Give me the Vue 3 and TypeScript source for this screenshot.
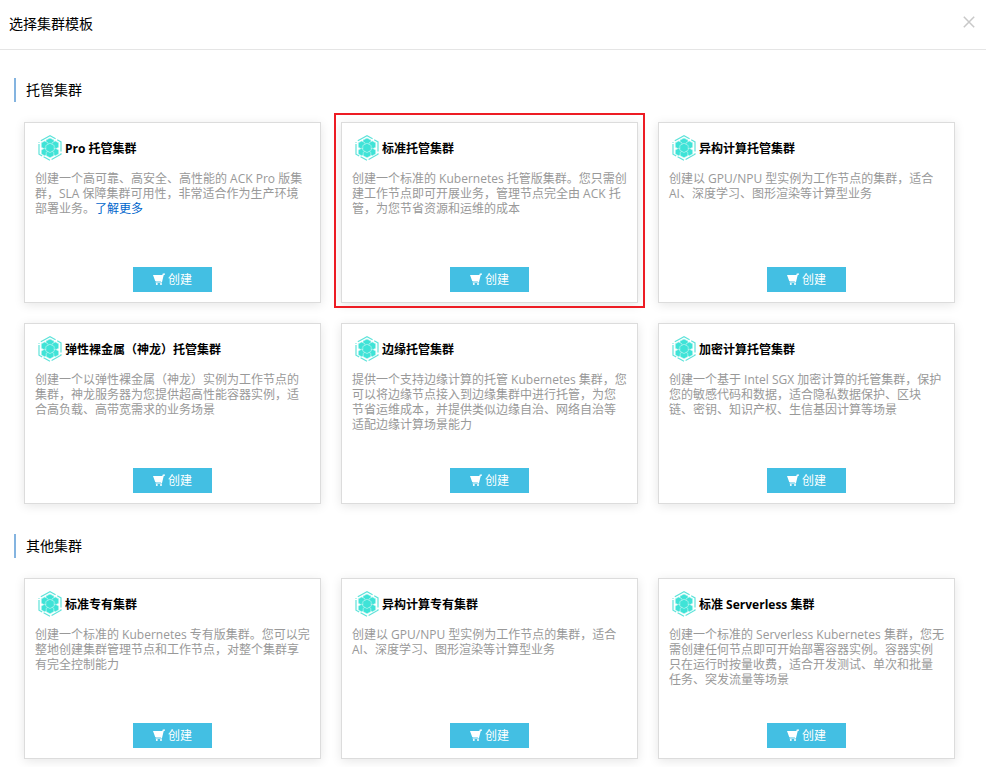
<script setup lang="ts">
interface Template {
  name: string
  lines: string[]
  link?: string
  highlighted?: boolean
}

interface Section {
  id: string
  title: string
  templates: Template[]
}

const sections: Section[] = [
  {
    id: 'managed',
    title: '托管集群',
    templates: [
      {
        name: 'Pro 托管集群',
        lines: ['创建一个高可靠、高安全、高性能的 ACK Pro 版集', '群，SLA 保障集群可用性，非常适合作为生产环境', '部署业务。'],
        link: '了解更多',
      },
      {
        name: '标准托管集群',
        lines: ['创建一个标准的 Kubernetes 托管版集群。您只需创', '建工作节点即可开展业务，管理节点完全由 ACK 托', '管，为您节省资源和运维的成本'],
        highlighted: true,
      },
      {
        name: '异构计算托管集群',
        lines: ['创建以 GPU/NPU 型实例为工作节点的集群，适合', 'AI、深度学习、图形渲染等计算型业务'],
      },
      {
        name: '弹性裸金属（神龙）托管集群',
        lines: ['创建一个以弹性裸金属（神龙）实例为工作节点的', '集群，神龙服务器为您提供超高性能容器实例，适', '合高负载、高带宽需求的业务场景'],
      },
      {
        name: '边缘托管集群',
        lines: ['提供一个支持边缘计算的托管 Kubernetes 集群，您', '可以将边缘节点接入到边缘集群中进行托管，为您', '节省运维成本，并提供类似边缘自治、网络自治等', '适配边缘计算场景能力'],
      },
      {
        name: '加密计算托管集群',
        lines: ['创建一个基于 Intel SGX 加密计算的托管集群，保护', '您的敏感代码和数据，适合隐私数据保护、区块', '链、密钥、知识产权、生信基因计算等场景'],
      },
    ],
  },
  {
    id: 'other',
    title: '其他集群',
    templates: [
      {
        name: '标准专有集群',
        lines: ['创建一个标准的 Kubernetes 专有版集群。您可以完', '整地创建集群管理节点和工作节点，对整个集群享', '有完全控制能力'],
      },
      {
        name: '异构计算专有集群',
        lines: ['创建以 GPU/NPU 型实例为工作节点的集群，适合', 'AI、深度学习、图形渲染等计算型业务'],
      },
      {
        name: '标准 Serverless 集群',
        lines: ['创建一个标准的 Serverless Kubernetes 集群，您无', '需创建任何节点即可开始部署容器实例。容器实例', '只在运行时按量收费，适合开发测试、单次和批量', '任务、突发流量等场景'],
      },
    ],
  },
]
</script>

<template>
  <main class="dialog">
    <header class="dialog-header">
      <h1 class="dialog-title">选择集群模板</h1>
      <button class="close" type="button" aria-label="关闭">
        <svg viewBox="0 0 12 12" width="12" height="12" aria-hidden="true">
          <path d="M.8.8 11.2 11.2M11.2.8.8 11.2" fill="none" stroke="#c8c8c8" stroke-width="1.5" />
        </svg>
      </button>
    </header>

    <section v-for="section in sections" :key="section.id" class="section">
      <h2 class="section-title">{{ section.title }}</h2>
      <div class="grid">
        <article
          v-for="item in section.templates"
          :key="item.name"
          class="card"
          :class="{ highlighted: item.highlighted }"
        >
          <h3 class="card-title">
            <svg class="logo" viewBox="0 0 24 26" width="24" height="26" aria-hidden="true">
              <path
                d="M2.8 5.8 12 .8l5.6 3M19.2 4.8 23 6.9v9.6M23 18.2v1L13.6 24.5M12 25.3 5.6 21.8M4.2 21 1 19.2V9M1 7.8v-.9"
                fill="none"
                stroke="#5fe3da"
                stroke-width="1.2"
              />
              <g fill="#3fe3d7" stroke="#c9f7f3" stroke-width=".6">
                <path d="M12 3 16 5.1v3.8L12 11 8 8.9V5.1z" />
                <path d="M6.7 6 10 7.8v4.4l-3.3 1.9-3.4-1.9V7.8z" />
                <path d="M17.3 6l3.4 1.8v4.4l-3.4 1.9-3.3-1.9V7.8z" />
                <path d="M6.7 13.2 10 15v4l-3.3 1.8L3.3 19v-4z" />
                <path d="M17.3 13.2l3.4 1.8v4l-3.4 1.8L14 19v-4z" />
                <path d="M12 15.3l3.8 2v3.4L12 22.8l-3.8-2.1v-3.4z" />
                <path d="M12 8.2l4.2 2.3v4.7L12 17.6l-4.2-2.4v-4.7z" />
              </g>
            </svg>
            <span>{{ item.name }}</span>
          </h3>
          <p class="description">
            <span v-for="(line, index) in item.lines" :key="line" class="line">
              <span>{{ line }}</span><a v-if="item.link && index === item.lines.length - 1" href="#">{{ item.link }}</a>
            </span>
          </p>
          <button class="create" type="button">
            <svg viewBox="0 0 12 13" width="12" height="13" aria-hidden="true">
              <path d="M0 2h9.3L9.8.6H12v1.2h-1.2L8.9 9.6H2.6V8.6h5.3V8.1H2.2z" fill="#fff" />
              <circle cx="3.8" cy="11.1" r="1" fill="#fff" />
              <circle cx="8" cy="11.1" r="1" fill="#fff" />
            </svg>
            <span>创建</span>
          </button>
        </article>
      </div>
    </section>
  </main>
</template>

<style>
body {
  margin: 0;
  background: #fff;
}
</style>

<style scoped>
.dialog {
  box-sizing: border-box;
  font-family: 'Open Sans', 'Noto Sans CJK SC', sans-serif;
  font-size: 12px;
  line-height: 15px;
  color: #000;
  padding-bottom: 8px;
}

.dialog-header {
  display: flex;
  align-items: center;
  justify-content: space-between;
  box-sizing: border-box;
  height: 50px;
  padding: 0 11px 2px 9px;
  border-bottom: 1px solid #e5e5e5;
}

h1,
h2,
h3,
p {
  margin: 0;
}

.dialog-title,
.section-title {
  font-size: 14px;
  font-weight: 400;
  line-height: 24px;
}

.close {
  display: flex;
  padding: 0 0 4px;
  border: 0;
  background: none;
  cursor: pointer;
}

.section {
  padding: 28px 31px 0 14px;
}

.section + .section {
  padding-top: 30px;
}

.section-title {
  padding-left: 10px;
  border-left: 2px solid #84b4e0;
}

.grid {
  display: grid;
  grid-template-columns: repeat(3, minmax(0, 1fr));
  gap: 20px;
  padding: 20px 0 0 10px;
}

.card {
  position: relative;
  display: flex;
  flex-direction: column;
  box-sizing: border-box;
  min-height: 181px;
  padding: 12px 10px 10px;
  border: 1px solid #dcdcdc;
  background: #fff;
  box-shadow: 0 2px 10px rgba(0, 0, 0, 0.1);
}

.highlighted::after {
  content: '';
  position: absolute;
  inset: -10px -8px -6px;
  border: 2px solid #ed1c24;
  pointer-events: none;
}

.card-title {
  display: flex;
  align-items: center;
  gap: 3px;
  padding-left: 3px;
  font-size: 12px;
  font-weight: 700;
}

.logo {
  flex: none;
}

.description {
  padding-top: 10px;
  color: #999;
}

.line {
  display: block;
  white-space: nowrap;
}

.description a {
  color: #06c;
  text-decoration: none;
}

.create {
  display: flex;
  align-items: center;
  justify-content: center;
  gap: 3px;
  align-self: center;
  height: 25px;
  margin-top: auto;
  padding: 0 20px;
  border: 0;
  background: #43bfe3;
  color: #fff;
  font: inherit;
  cursor: pointer;
}
</style>
